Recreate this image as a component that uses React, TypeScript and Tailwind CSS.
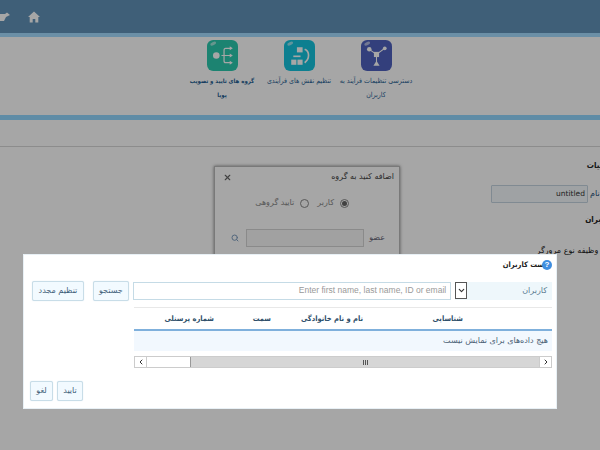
import { Search, X, ChevronDown, ChevronLeft, ChevronRight } from 'lucide-react';

const font = "font-['DejaVu_Sans','Noto_Sans',sans-serif]";
const narrow = "font-['DejaVu_Sans_Condensed','DejaVu_Sans',sans-serif]";

function Gloss() {
  return <ellipse cx="6" cy="3.5" rx="3" ry="1.5" fill="#fff" opacity="0.55" transform="rotate(-25 6 3.5)" />;
}

function TileNodes() {
  return (
    <svg viewBox="0 0 30 30" className="h-[31px] w-[31px]">
      <rect width="30" height="30" rx="6" fill="#4f62bf" />
      <Gloss />
      <g stroke="#fff" strokeWidth="1" fill="none">
        <path d="M8 9 L15 14 L23 8 M15 14 V23" />
      </g>
      <g fill="#fff">
        <circle cx="8" cy="9" r="2.2" />
        <circle cx="23" cy="8" r="1.8" />
        <rect x="12.5" y="11.5" width="5" height="5" />
        <path d="M15 20 L18 25 H12 Z" />
      </g>
    </svg>
  );
}

function TileRoles() {
  return (
    <svg viewBox="0 0 30 30" className="h-[31px] w-[31px]">
      <rect width="30" height="30" rx="6" fill="#14c4de" />
      <Gloss />
      <g fill="#fff">
        <rect x="12.5" y="7" width="5.5" height="5" />
        <rect x="7" y="19" width="5" height="5" />
        <rect x="13" y="19" width="5" height="5" />
        <rect x="9" y="15" width="7" height="1.6" />
      </g>
      <path d="M20 9 C25 11 25 18 20 22" stroke="#fff" strokeWidth="1.6" fill="none" />
    </svg>
  );
}

function TileGroups() {
  return (
    <svg viewBox="0 0 30 30" className="h-[31px] w-[31px]">
      <rect width="30" height="30" rx="6" fill="#2cc9ae" />
      <Gloss />
      <circle cx="9" cy="15" r="3.2" fill="#fff" />
      <g stroke="#fff" strokeWidth="1.2" fill="none">
        <path d="M23 8 H18 Q16.5 8 16.5 10 V20 Q16.5 22 18 22 H23 M14 15 H23" />
      </g>
      <path d="M22 6 L25 8 L22 10 Z M22 13 L25 15 L22 17 Z M22 20 L25 22 L22 24 Z" fill="#fff" />
    </svg>
  );
}

function Tile({ icon, lines, bold }: { icon: React.ReactNode; lines: string[]; bold?: boolean }) {
  return (
    <div className="flex w-[77px] flex-col items-center">
      {icon}
      <div className={`mt-[3px] w-[77px] text-center leading-[14px] whitespace-nowrap text-[#1f5f94] ${bold ? `${narrow} text-[6px] font-bold` : `${narrow} text-[7px]`}`}>
        {lines.map((l) => (
          <div key={l}>{l}</div>
        ))}
      </div>
    </div>
  );
}

function Btn({ children, className = '' }: { children: React.ReactNode; className?: string }) {
  return (
    <button className={`flex h-[20px] items-center justify-center rounded-[2px] border border-[#c8dde8] bg-[#f2faff] text-[8px] text-[#3f5f7a] shadow-[0_0_1px_#c8dde8] ${className}`}>
      {children}
    </button>
  );
}

export default function App() {
  return (
    <div className={`relative h-[450px] w-[600px] overflow-hidden bg-white ${font}`} dir="rtl">
      <header className="flex h-[33px] items-center justify-between bg-[#6192b9] pr-[560px]" dir="rtl">
        <svg viewBox="0 0 12 12" className="h-[12px] w-[12px]">
          <path d="M6 0.5 L12 6 H10.3 V11.5 H7.3 V8 H4.7 V11.5 H1.7 V6 H0 Z" fill="#fff" />
        </svg>
        <svg viewBox="0 0 10 10" className="h-[10px] w-[10px]">
          <path d="M0 2 H5 L7 0.5 L10 3 L6 5 L4 9 H0 Z" fill="#fff" />
        </svg>
      </header>
      <div className="h-[4px] bg-[#a5dcff]" />

      <div className="flex h-[78px] justify-center pr-[2px] pt-[3px]">
        <Tile icon={<TileNodes />} lines={['دسترسی تنظیمات فرآیند به', 'کاربران']} />
        <Tile icon={<TileRoles />} lines={['تنظیم نقش های فرآیندی']} />
        <Tile icon={<TileGroups />} lines={['گروه های تایید و تصویب', 'پویا']} bold />
      </div>
      <div className="h-[5px] bg-[#92d8ff]" />
      <div className="h-[27px] border-b border-[#d8d8d8]" />

      <section className="mr-[-12px] pt-[13px] text-[8px] text-[#222]">
        <div className={`${narrow} font-bold`}>جزئیات</div>
        <div className="mt-[13px] flex items-center">
          <span className="w-[24px] pl-[2px] text-left text-[#1f4f78]">نام</span>
          <div className="flex h-[18px] w-[97px] items-center rounded-[1px] border border-[#c5d5e0] bg-[#f4f9fc] px-[2px] text-[7.5px] text-[#333]">
            untitled
          </div>
        </div>
        <div className={`${narrow} mt-[11px] font-bold`}>کاربران</div>
        <div className="mt-[19px] text-[#222]">نوع وظیفه نوع مرورگر</div>
      </section>

      <div className="absolute top-[166px] left-[214px] h-[130px] w-[186px] border border-[#bbb] bg-white shadow-[0_0_3px_rgba(0,0,0,0.5)]">
        <div className="flex items-center justify-between px-[5px] pt-[4px] pl-[8px] text-[8px] text-[#444]">
          <span>اضافه کنید به گروه</span>
          <X className="h-[9px] w-[9px] text-[#666]" strokeWidth={3} />
        </div>
        <div className="mt-[14px] flex items-center gap-[6px] pr-[50px] text-[8px] text-[#888]">
          <span className="flex h-[9px] w-[9px] items-center justify-center rounded-full border border-[#888]">
            <span className="h-[5px] w-[5px] rounded-full bg-[#666]" />
          </span>
          <span>کاربر</span>
          <span className="mr-[2px] h-[9px] w-[9px] rounded-full border border-[#888]" />
          <span>تایید گروهی</span>
        </div>
        <div className="mt-[20px] flex items-center gap-[3px] pr-[14px] text-[8px] text-[#667]">
          <span className="w-[18px]">عضو</span>
          <div className="h-[18px] w-[118px] border border-[#d4d4d4] bg-[#f8f8f8]" />
          <Search className="mr-[4px] h-[8px] w-[8px] text-[#7f9fc0]" strokeWidth={3} />
        </div>
      </div>

      <div className="absolute inset-0 bg-black/35" />

      <div className="absolute top-[254px] left-[23px] h-[155px] w-[534px] border border-[#e8f0f5] bg-white pt-[3px] pr-[4px] pl-[8px]">
        <div className="flex h-[14px] items-center text-[9px] font-bold text-[#222]">
          <span className="relative z-10 flex h-[10px] w-[10px] items-center justify-center rounded-full bg-[#3f8ee0] font-['Liberation_Sans'] text-[8px] text-white">?</span>
          <span className={`${narrow} mr-[-2px] text-[7.5px]`}>ست کاربران</span>
        </div>

        <div className="mt-[9px] flex h-[19px] items-center">
          <div className="flex h-[18px] w-[97px] items-center justify-between bg-[#eef7fb] pr-[5px] text-[8px] text-[#5a7a90]">
            <span>کاربران</span>
            <span className="flex h-[17px] w-[12px] items-center justify-center border border-[#555] bg-white">
              <ChevronDown className="h-[9px] w-[9px] text-[#333]" strokeWidth={3} />
            </span>
          </div>
          <div className="mr-[4px] flex h-[18px] w-[319px] items-center justify-end border border-[#c5dbe6] bg-white px-[4px] font-['Liberation_Sans'] text-[8.5px] text-[#999]" dir="ltr">
            Enter first name, last name, ID or email
          </div>
          <Btn className="mr-[4px] w-[36px]">جستجو</Btn>
          <Btn className="mr-[9px] w-[52px]">تنظیم مجدد</Btn>
        </div>

        <div className="mt-[7px] w-[418px]">
          <div className={`${narrow} flex h-[24px] items-center border-t border-b-2 border-t-[#e8e8e8] border-b-[#7fb0dc] text-[7.5px] font-bold text-[#2f4f6a]`}>
            <span className="mr-[89px] w-[100px]">شناسایی</span>
            <span className="w-[92px]">نام و نام خانوادگی</span>
            <span className="w-[57px]">سمت</span>
            <span>شماره پرسنلی</span>
          </div>
          <div className="flex h-[20px] items-center bg-[#f2f8fe] pr-[4px] text-[8px] text-[#4a6075]">
            هیچ داده‌های برای نمایش نیست
          </div>
          <div className="mt-[5px] flex h-[12px] border border-[#ccc] bg-white" dir="ltr">
            <span className="flex w-[12px] items-center justify-center border-r border-[#ccc]">
              <ChevronLeft className="h-[8px] w-[8px] text-[#333]" strokeWidth={3} />
            </span>
            <div className="w-[43px]" />
            <div className="flex flex-1 items-center justify-center gap-[1px] border-l border-[#999] bg-[#d6d6d6]">
              <span className="h-[5px] w-px bg-[#555]" />
              <span className="h-[5px] w-px bg-[#555]" />
              <span className="h-[5px] w-px bg-[#555]" />
            </div>
            <span className="flex w-[12px] items-center justify-center border-l border-[#ccc]">
              <ChevronRight className="h-[8px] w-[8px] text-[#333]" strokeWidth={3} />
            </span>
          </div>
        </div>

        <div className="mt-[13px] ml-[-2px] flex justify-end gap-[4px]">
          <Btn className="w-[26px]">تایید</Btn>
          <Btn className="w-[23px]">لغو</Btn>
        </div>
      </div>
    </div>
  );
}
